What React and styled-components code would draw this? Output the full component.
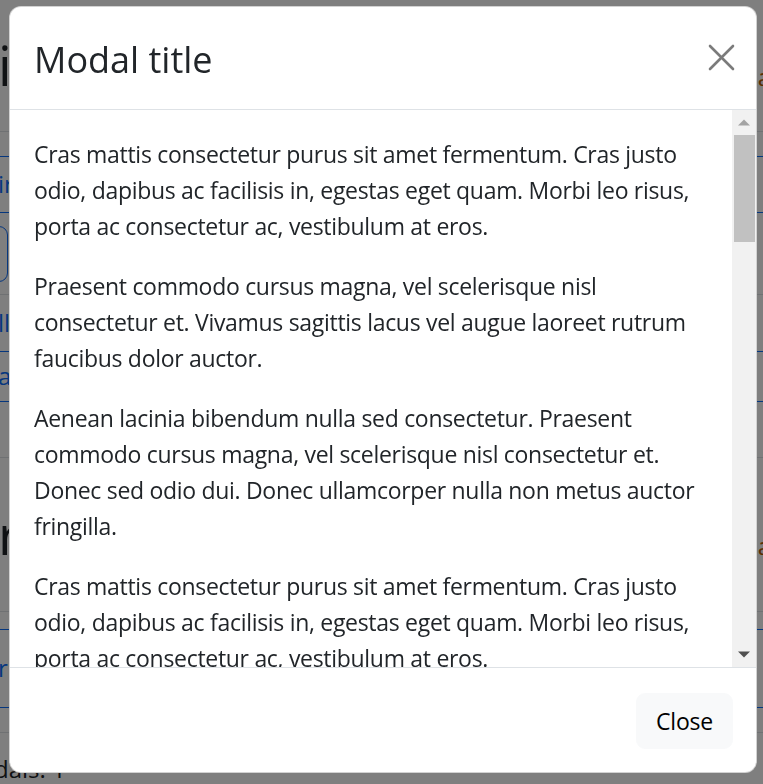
import React from "react";
import styled, { createGlobalStyle } from "styled-components";

const GlobalStyle = createGlobalStyle`
  html, body {
    margin: 0;
    padding: 0;
    background: #fff;
    overflow: hidden;
  }
  body {
    font-family: "Open Sans", "Noto Sans", sans-serif;
    color: #212529;
  }
`;

const paragraphs = [
  "Cras mattis consectetur purus sit amet fermentum. Cras justo odio, dapibus ac facilisis in, egestas eget quam. Morbi leo risus, porta ac consectetur ac, vestibulum at eros.",
  "Praesent commodo cursus magna, vel scelerisque nisl consectetur et. Vivamus sagittis lacus vel augue laoreet rutrum faucibus dolor auctor.",
  "Aenean lacinia bibendum nulla sed consectetur. Praesent commodo cursus magna, vel scelerisque nisl consectetur et. Donec sed odio dui. Donec ullamcorper nulla non metus auctor fringilla.",
];

const bodyText = Array.from({ length: 6 }).flatMap(() => paragraphs);

// page behind the backdrop, mostly hidden by the modal
const bgRows = [
  { h: 132, kind: "heading", text: "i", line: "#dee2e6" },
  { h: 25, line: "#0d6efd" },
  { h: 56, kind: "link", text: "ir", line: "#0d6efd" },
  { h: 82, kind: "box", line: "#dee2e6" },
  { h: 57, kind: "link", text: "ll", line: "#0d6efd" },
  { h: 50, kind: "link", text: "a", line: "#0d6efd" },
  { h: 56, line: "#dee2e6" },
  { h: 154, kind: "big", text: "r", line: "#dee2e6" },
  { h: 18, line: "#0d6efd" },
  { h: 78, kind: "link", text: "r", line: "#0d6efd" },
  { h: 25, line: "#dee2e6" },
  { h: 51, kind: "text", text: "dals: 1" },
];

const Page = styled.div`
  display: flex;
  flex-direction: column;
  width: 763px;
`;

const PageRow = styled.div`
  height: ${(p) => p.$h}px;
  box-sizing: border-box;
  border-bottom: ${(p) => (p.$line ? `1px solid ${p.$line}` : "none")};
  display: flex;
  align-items: ${(p) => (p.$kind === "text" ? "flex-end" : "center")};
  justify-content: space-between;
  font-family: "Open Sans", sans-serif;
  font-size: ${(p) =>
    p.$kind === "heading" || p.$kind === "big" ? 54 : 24}px;
  color: ${(p) => (p.$kind === "link" ? "#0d6efd" : "#212529")};
  line-height: 1.2;
`;

const RowText = styled.span`
  margin-left: ${(p) => (p.$kind === "text" ? -6 : -2)}px;
`;

const Badge = styled.span`
  font-size: 24px;
  color: #b35c00;
  margin-right: -8px;
  margin-top: 24px;
`;

const OutlineBox = styled.span`
  width: 40px;
  height: 54px;
  margin-left: -34px;
  border: 1px solid #0d6efd;
  border-radius: 9px;
`;

const Backdrop = styled.div`
  position: fixed;
  inset: 0;
  background: rgba(0, 0, 0, 0.5);
  box-sizing: border-box;
  padding: 6px 6px 11px 9px;
  display: flex;
`;

const Dialog = styled.div`
  flex: 1;
  display: flex;
  flex-direction: column;
  background: #fff;
  border: 1px solid rgba(0, 0, 0, 0.175);
  border-radius: 12px;
  overflow: hidden;
  min-height: 0;
`;

const Header = styled.div`
  display: flex;
  align-items: center;
  justify-content: space-between;
  padding: 26px 24px 22px 24px;
  border-bottom: 1px solid #dee2e6;
  flex-shrink: 0;
`;

const Title = styled.h1`
  margin: 0;
  font-size: 36px;
  line-height: 54px;
  font-weight: 500;
  color: #212529;
`;

const CloseX = styled.button`
  width: 36px;
  height: 36px;
  padding: 0;
  margin: -5px -7px 0 0;
  border: 0;
  background: transparent;
  display: flex;
  align-items: center;
  justify-content: center;
  color: #7b7b7b;
  cursor: pointer;
`;

const BodyWrap = styled.div`
  flex: 1;
  min-height: 0;
  display: flex;
`;

const Body = styled.div`
  flex: 1;
  min-width: 0;
  overflow: hidden;
  padding: 26px 24px 24px;
  font-size: 23px;
  letter-spacing: -0.3px;
  line-height: 36px;
`;

const Para = styled.p`
  margin: 0 0 24px;
  &:last-child {
    margin-bottom: 0;
  }
`;

const ScrollBar = styled.div`
  width: 24px;
  flex-shrink: 0;
  background: #f1f1f1;
  display: flex;
  flex-direction: column;
`;

const ArrowBtn = styled.div`
  height: 25px;
  flex-shrink: 0;
  display: flex;
  align-items: center;
  justify-content: center;
`;

const Track = styled.div`
  flex: 1;
  padding: 0 1px 0 2px;
`;

const Thumb = styled.div`
  height: 107px;
  background: #c1c1c1;
`;

const Footer = styled.div`
  display: flex;
  justify-content: flex-end;
  align-items: center;
  padding: 19px 17px 17px;
  border-top: 1px solid #dee2e6;
  flex-shrink: 0;
`;

const Button = styled.button`
  margin: 6px;
  padding: 9px 19px;
  font-family: inherit;
  font-size: 23px;
  letter-spacing: -0.2px;
  line-height: 36px;
  color: #000;
  background: #f8f9fa;
  border: 1px solid #f8f9fa;
  border-radius: 9px;
  cursor: pointer;
`;

const Arrow = ({ up, color }) => (
  <svg width="12" height="7" viewBox="0 0 12 7">
    <path d={up ? "M0 6.5 L6 0.5 L12 6.5 Z" : "M0 0.5 L6 6.5 L12 0.5 Z"} fill={color} />
  </svg>
);

export default function App() {
  return (
    <>
      <GlobalStyle />
      <Page>
        {bgRows.map((r, i) => (
          <PageRow key={i} $h={r.h} $line={r.line} $kind={r.kind}>
            {r.kind === "box" ? (
              <OutlineBox />
            ) : (
              <RowText $kind={r.kind}>{r.text || ""}</RowText>
            )}
            {(r.kind === "heading" || r.kind === "big") && <Badge>a</Badge>}
          </PageRow>
        ))}
      </Page>
      <Backdrop>
        <Dialog role="dialog">
          <Header>
            <Title>Modal title</Title>
            <CloseX aria-label="Close">
              <svg width="27" height="27" viewBox="0 0 27 27" fill="none">
                <path
                  d="M2 2 L25 25 M25 2 L2 25"
                  stroke="currentColor"
                  strokeWidth="2.6"
                  strokeLinecap="round"
                />
              </svg>
            </CloseX>
          </Header>
          <BodyWrap>
            <Body>
              {bodyText.map((t, i) => (
                <Para key={i}>{t}</Para>
              ))}
            </Body>
            <ScrollBar>
              <ArrowBtn>
                <Arrow up color="#a3a3a3" />
              </ArrowBtn>
              <Track>
                <Thumb />
              </Track>
              <ArrowBtn>
                <Arrow color="#505050" />
              </ArrowBtn>
            </ScrollBar>
          </BodyWrap>
          <Footer>
            <Button>Close</Button>
          </Footer>
        </Dialog>
      </Backdrop>
    </>
  );
}
